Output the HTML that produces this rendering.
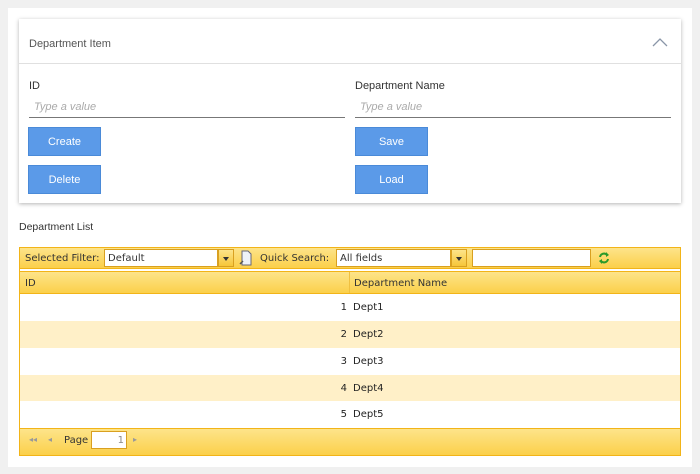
<!DOCTYPE html>
<html><head><style>
*{box-sizing:border-box;margin:0;padding:0}
body{width:700px;height:474px;background:#f0f0f0;font-family:"Liberation Sans",sans-serif;position:relative;overflow:hidden}
.wrap{position:absolute;left:8px;top:8px;width:684px;height:459px;background:#fff}
.card{position:absolute;left:19px;top:19px;width:662px;height:184px;background:#fff;box-shadow:0 1px 4px rgba(0,0,0,.3)}
.a{position:absolute}
.hd{left:0;top:0;width:662px;height:45px;border-bottom:1px solid #e0e0e0}
.t{font-size:11px;color:#555}
.lbl{font-size:11px;color:#333}
.ph{font-size:11px;color:#aaa;font-style:italic}
.line{height:1px;background:#777}
.btn{width:73px;height:29px;background:#5b9ae8;border:1px solid #4a8ad8;color:#fff;font-size:11px;text-align:center;line-height:29px}
.grid{position:absolute;left:19px;top:247px;width:662px;height:209px;border:1px solid #f2b418;background:#fff}
.bar{background:linear-gradient(#fde48a,#fbd04a);}
.g{font-family:"DejaVu Sans",sans-serif;font-size:10px;color:#333}
.inp{background:#fff;border:1px solid #d9a020;height:18px;font-size:10px;padding-left:3px;line-height:17px}
.dd{width:16px;height:18px;border:1px solid #d9a020;background:linear-gradient(#fde48a,#f6c63a)}
.dd:after{content:"";position:absolute;left:4px;top:7px;border:3px solid transparent;border-top:4px solid #333}
.row{position:absolute;left:0;width:660px;height:27px;font-family:"DejaVu Sans",sans-serif;font-size:10px;color:#222;line-height:27px}
.row .n{position:absolute;left:0;width:327px;text-align:right}
.row .d{position:absolute;left:333px}
</style></head><body>
<div class="wrap"></div>
<div class="card">
<div class="a hd"><div class="a t" style="left:10px;top:19px">Department Item</div>
<svg class="a" style="left:633px;top:18px" width="16" height="10"><path d="M1 9 L8 2 L15 9" stroke="#8a96a8" stroke-width="1.3" fill="none"/></svg></div>
<div class="a lbl" style="left:10px;top:61px">ID</div>
<div class="a ph" style="left:15px;top:82px">Type a value</div>
<div class="a line" style="left:10px;top:98px;width:316px"></div>
<div class="a lbl" style="left:336px;top:61px">Department Name</div>
<div class="a ph" style="left:341px;top:82px">Type a value</div>
<div class="a line" style="left:336px;top:98px;width:316px"></div>
<div class="a btn" style="left:9px;top:108px">Create</div>
<div class="a btn" style="left:9px;top:146px">Delete</div>
<div class="a btn" style="left:336px;top:108px">Save</div>
<div class="a btn" style="left:336px;top:146px">Load</div>
</div>
<div class="a lbl" style="left:19px;top:221px;font-size:10.5px">Department List</div>
<div class="grid">
<div class="a bar" style="left:0;top:0;width:660px;height:21px;border-bottom:1px solid #f2b418"></div>
<div class="a g" style="left:5px;top:5px">Selected Filter:</div>
<div class="a inp g" style="left:84px;top:1px;width:114px">Default</div>
<div class="a dd" style="left:198px;top:1px"></div>
<svg class="a" style="left:219px;top:2px" width="14" height="16"><path d="M3 1h6l3 3v11H3z" fill="#eef2f8" stroke="#667"/><path d="M1 14l3-3" stroke="#555" stroke-width="1.5"/></svg>
<div class="a g" style="left:240px;top:5px">Quick Search:</div>
<div class="a inp g" style="left:316px;top:1px;width:115px">All fields</div>
<div class="a dd" style="left:431px;top:1px"></div>
<div class="a inp" style="left:452px;top:1px;width:119px"></div>
<svg class="a" style="left:578px;top:4px" width="12" height="12"><path d="M2 5a4 4 0 0 1 7-2M10 7a4 4 0 0 1-7 2" stroke="#2a9a2a" stroke-width="2" fill="none"/><path d="M8 0l3 3-3 2zM4 12l-3-3 3-2z" fill="#2a9a2a"/></svg>
<div class="a bar" style="left:0;top:23px;width:660px;height:23px;border-top:1px solid #f2b418;border-bottom:1px solid #f2b418"></div>
<div class="a" style="left:329px;top:24px;width:1px;height:21px;background:#f0c040"></div>
<div class="a g" style="left:5px;top:30px">ID</div>
<div class="a g" style="left:334px;top:30px">Department Name</div>
<div class="row" style="top:46px;background:#fff"><span class="n">1</span><span class="d">Dept1</span></div>
<div class="row" style="top:73px;background:#fff0c8"><span class="n">2</span><span class="d">Dept2</span></div>
<div class="row" style="top:100px;background:#fff"><span class="n">3</span><span class="d">Dept3</span></div>
<div class="row" style="top:127px;background:#fff0c8"><span class="n">4</span><span class="d">Dept4</span></div>
<div class="row" style="top:153px;background:#fff"><span class="n">5</span><span class="d">Dept5</span></div>
<div class="a bar" style="left:0;top:180px;width:660px;height:27px;border-top:1px solid #f2b418"></div>
<div class="a g" style="left:9px;top:187px;color:#999;font-size:8px">◂◂</div>
<div class="a g" style="left:28px;top:187px;color:#999;font-size:8px">◂</div>
<div class="a g" style="left:44px;top:187px">Page</div>
<div class="a inp g" style="left:71px;top:183px;width:36px;text-align:right;padding-right:2px;color:#888">1</div>
<div class="a g" style="left:113px;top:187px;color:#999;font-size:8px">▸</div>
</div>
</body></html>
